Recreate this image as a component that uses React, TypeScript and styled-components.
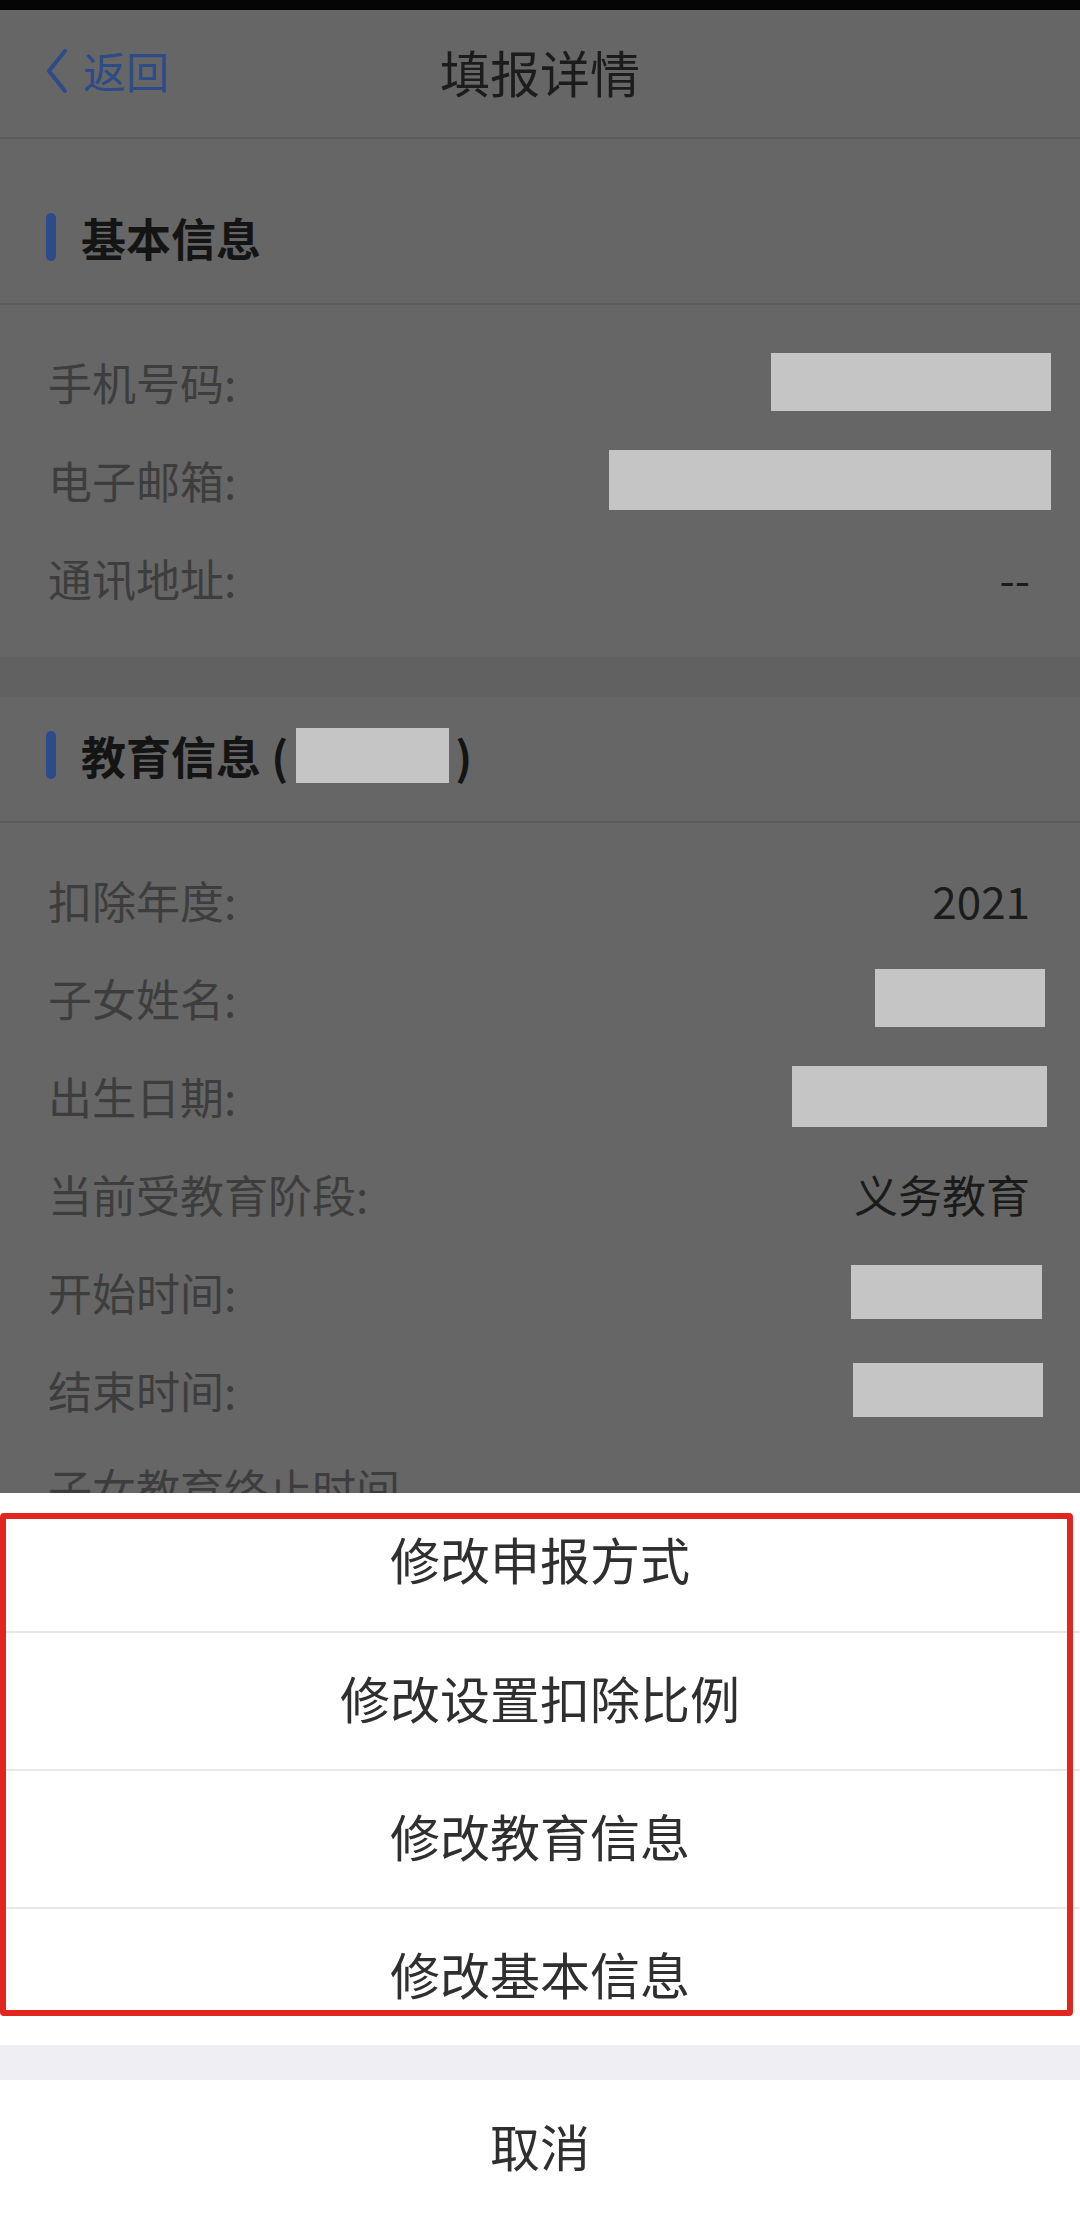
import React from 'react';
import styled, { createGlobalStyle } from 'styled-components';

const GlobalStyle = createGlobalStyle`
  html, body {
    margin: 0;
    padding: 0;
    background: #666666;
  }
  body {
    font-family: "Noto Sans CJK SC", "Noto Sans", sans-serif;
  }
  * {
    box-sizing: border-box;
  }
`;

const Screen = styled.div`
  position: relative;
  width: 1080px;
  height: 2217px;
  overflow: hidden;
  background: #666666;
`;

const StatusStrip = styled.div`
  height: 10px;
  background: #050505;
`;

const NavBar = styled.div`
  height: 129px;
  display: grid;
  grid-template-columns: 1fr auto 1fr;
  align-items: center;
  padding-bottom: 6px;
  border-bottom: 2px solid #5b5b5b;
`;

const BackLink = styled.div`
  display: flex;
  align-items: center;
  gap: 14px;
  padding-left: 45px;
  color: #2e4b87;
  font-size: 43px;
  line-height: 1;
`;

const NavTitle = styled.div`
  font-size: 50px;
  line-height: 1;
  color: #1c1c1c;
`;

const SectionGap = styled.div<{ $h: number; $tone: string }>`
  height: ${({ $h }) => $h}px;
  background: ${({ $tone }) => $tone};
`;

const SectionHeader = styled.div`
  height: 126px;
  display: flex;
  align-items: center;
  gap: 25px;
  padding: 0 0 8px 46px;
  border-bottom: 2px solid #5b5b5b;
`;

const AccentBar = styled.span`
  width: 10px;
  height: 48px;
  border-radius: 5px;
  background: #2b4b8a;
`;

const HeaderTitle = styled.div`
  display: flex;
  align-items: center;
  font-size: 45px;
  font-weight: 700;
  line-height: 1;
  color: #141414;
  white-space: pre;
`;

const SectionBody = styled.div`
  padding: 28px 0 30px;
`;

const Row = styled.div`
  height: 98px;
  display: flex;
  align-items: center;
  justify-content: space-between;
  padding: 0 50px 0 48px;
`;

const Label = styled.span`
  font-size: 44px;
  line-height: 1;
  color: #3d3d3d;
`;

const Value = styled.span`
  font-size: 44px;
  line-height: 1;
  color: #1b1b1b;
`;

const Redact = styled.span<{ $w: number; $h: number; $nudge?: number; $inline?: boolean }>`
  display: inline-block;
  width: ${({ $w }) => $w}px;
  height: ${({ $h }) => $h}px;
  margin: ${({ $inline }) => ($inline ? '0 6px 0 8px' : '0')};
  margin-right: ${({ $nudge, $inline }) => ($inline ? 6 : -($nudge || 0))}px;
  background: #c5c5c5;
`;

const Sheet = styled.div`
  position: absolute;
  left: 0;
  right: 0;
  bottom: 0;
  background: #ffffff;
`;

const ActionGroup = styled.div`
  position: relative;
  &::after {
    content: '';
    position: absolute;
    top: 20px;
    left: 0;
    right: 7px;
    bottom: 29px;
    border: 6px solid #e0261f;
    border-radius: 4px;
    pointer-events: none;
  }
`;

const ActionItem = styled.div`
  height: 138px;
  display: flex;
  align-items: center;
  justify-content: center;
  padding-bottom: 8px;
  font-size: 50px;
  line-height: 1;
  color: #2f2f2f;
  & + & {
    border-top: 2px solid #e8e8e8;
  }
`;

const SheetGap = styled.div`
  height: 35px;
  background: #efeff3;
`;

const CancelItem = styled(ActionItem)`
  height: 137px;
`;

const Chevron = () => (
  <svg width="24" height="46" viewBox="0 0 24 46">
    <path d="M20 3 L4 23 L20 43" fill="none" stroke="#2e4b87" strokeWidth="4" strokeLinecap="round" strokeLinejoin="round" />
  </svg>
);

const basicRows = [
  { label: '手机号码:', box: { w: 280, h: 58, n: 21 } },
  { label: '电子邮箱:', box: { w: 442, h: 60, n: 21 } },
  { label: '通讯地址:', text: '--' },
];

const eduRows = [
  { label: '扣除年度:', text: '2021' },
  { label: '子女姓名:', box: { w: 170, h: 58, n: 15 } },
  { label: '出生日期:', box: { w: 255, h: 61, n: 17 } },
  { label: '当前受教育阶段:', text: '义务教育' },
  { label: '开始时间:', box: { w: 191, h: 54, n: 12 } },
  { label: '结束时间:', box: { w: 190, h: 54, n: 13 } },
  { label: '子女教育终止时间', text: '' },
];

const actions = ['修改申报方式', '修改设置扣除比例', '修改教育信息', '修改基本信息'];

type RowData = { label: string; text?: string; box?: { w: number; h: number; n: number } };

const InfoRow = ({ row }: { row: RowData }) => (
  <Row>
    <Label>{row.label}</Label>
    {row.box ? <Redact $w={row.box.w} $h={row.box.h} $nudge={row.box.n} /> : <Value>{row.text}</Value>}
  </Row>
);

const App = () => {
  return (
    <>
      <GlobalStyle />
      <Screen>
        <StatusStrip />
        <NavBar>
          <BackLink>
            <Chevron />
            返回
          </BackLink>
          <NavTitle>填报详情</NavTitle>
          <div />
        </NavBar>

        <SectionGap $h={40} $tone="#666666" />
        <SectionHeader>
          <AccentBar />
          <HeaderTitle>基本信息</HeaderTitle>
        </SectionHeader>
        <SectionBody>
          {basicRows.map(r => (
            <InfoRow key={r.label} row={r} />
          ))}
        </SectionBody>

        <SectionGap $h={40} $tone="#616161" />
        <SectionHeader>
          <AccentBar />
          <HeaderTitle>
            教育信息 (<Redact $inline $w={153} $h={55} />)
          </HeaderTitle>
        </SectionHeader>
        <SectionBody>
          {eduRows.map(r => (
            <InfoRow key={r.label} row={r} />
          ))}
        </SectionBody>

        <Sheet>
          <ActionGroup>
            {actions.map(a => (
              <ActionItem key={a}>{a}</ActionItem>
            ))}
          </ActionGroup>
          <SheetGap />
          <CancelItem>取消</CancelItem>
        </Sheet>
      </Screen>
    </>
  );
};

export default App;
